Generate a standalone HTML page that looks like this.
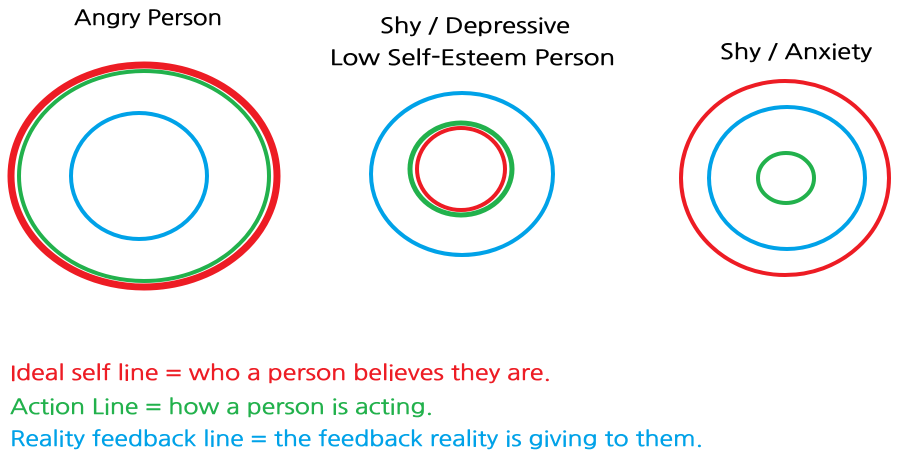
<!DOCTYPE html>
<html><head><meta charset="utf-8"><style>
html,body{margin:0;padding:0;background:#fff;}
svg{display:block;}
text{font-family:"NanumGothic","Liberation Sans",sans-serif;font-size:21px;stroke-width:0.5px;}
</style></head><body>
<svg width="919" height="468" viewBox="0 0 919 468" xmlns="http://www.w3.org/2000/svg">
<rect width="919" height="468" fill="#fff"/>
<g fill="none">
<ellipse cx="144" cy="176" rx="133" ry="111" stroke="#ED1C24" stroke-width="7"/>
<ellipse cx="144" cy="176" rx="125" ry="105" stroke="#22B14C" stroke-width="4"/>
<ellipse cx="139" cy="176" rx="68" ry="63" stroke="#00A2E8" stroke-width="4"/>

<ellipse cx="462" cy="174" rx="91" ry="81" stroke="#00A2E8" stroke-width="4"/>
<ellipse cx="461" cy="169" rx="51" ry="46" stroke="#22B14C" stroke-width="5"/>
<ellipse cx="461" cy="169" rx="44" ry="41" stroke="#ED1C24" stroke-width="4"/>

<ellipse cx="785" cy="178" rx="104" ry="97" stroke="#ED1C24" stroke-width="4"/>
<ellipse cx="787" cy="178" rx="78" ry="71" stroke="#00A2E8" stroke-width="4"/>
<ellipse cx="786" cy="178" rx="28" ry="25" stroke="#22B14C" stroke-width="4"/>
</g>
<g fill="#000" stroke="#000">
<text x="74" y="25" textLength="148" lengthAdjust="spacingAndGlyphs">Angry Person</text>
<text x="380" y="33" textLength="190" lengthAdjust="spacingAndGlyphs">Shy / Depressive</text>
<text x="330" y="65" textLength="285" lengthAdjust="spacingAndGlyphs">Low Self-Esteem Person</text>
<text x="720" y="59" textLength="152" lengthAdjust="spacingAndGlyphs">Shy / Anxiety</text>
</g>
<text x="10" y="380" fill="#ED1C24" stroke="#ED1C24" textLength="541" lengthAdjust="spacingAndGlyphs">Ideal self line = who a person believes they are.</text>
<text x="10" y="414" fill="#22B14C" stroke="#22B14C" textLength="423" lengthAdjust="spacingAndGlyphs">Action Line = how a person is acting.</text>
<text x="10" y="446" fill="#00A2E8" stroke="#00A2E8" textLength="693" lengthAdjust="spacingAndGlyphs">Reality feedback line = the feedback reality is giving to them.</text>
</svg>
</body></html>
